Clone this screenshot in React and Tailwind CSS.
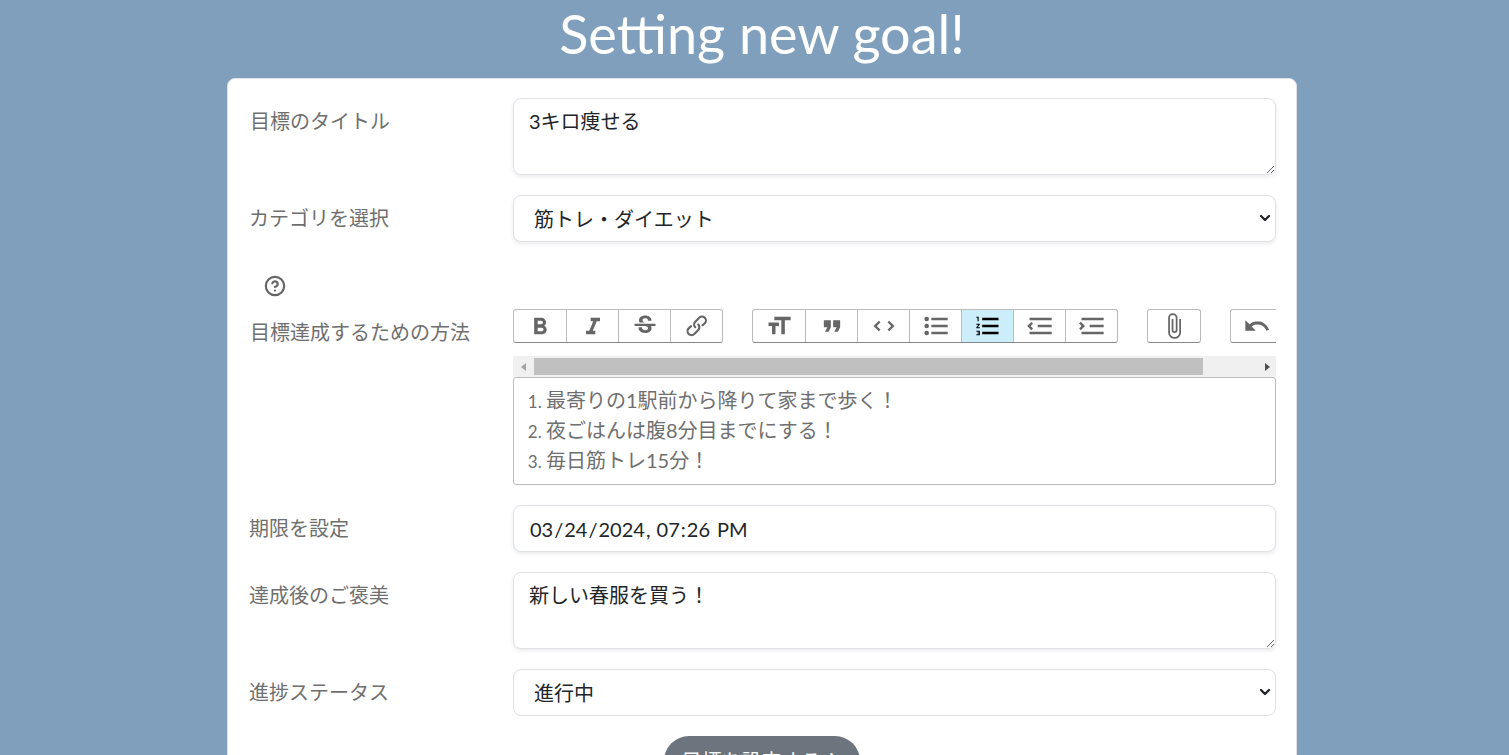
import { ChevronDown, CircleHelp } from 'lucide-react';

const CJK = 'font-["Lato","Noto_Sans_CJK_JP",sans-serif]';

const ICONS = {
  bold: 'M15.6 11.8c1-.7 1.6-1.8 1.6-2.8a4 4 0 0 0-4-4H7v14h7c2.1 0 3.7-1.7 3.7-3.8 0-1.5-.8-2.8-2.1-3.4zM10 7.5h3a1.5 1.5 0 1 1 0 3h-3v-3zm3.5 9H10v-3h3.5a1.5 1.5 0 1 1 0 3z',
  italic: 'M10 5v3h2.2l-3.4 8H6v3h8v-3h-2.2l3.4-8H18V5h-8z',
  strike: 'M6.85 7.08C6.85 4.37 9.45 3 12.24 3c1.64 0 3 .49 3.9 1.28.77.65 1.46 1.73 1.46 3.24h-3.01c0-.31-.05-.59-.15-.85-.29-.86-1.2-1.28-2.25-1.28-1.86 0-2.34 1.02-2.34 1.7 0 .48.25.88.75 1.21.38.25.77.48 1.41.7H7.39c-.21-.34-.54-.89-.54-1.92zM21 12v-2H3v2h9.62c1.15.45 1.96.75 1.96 1.97 0 1-.81 1.67-2.28 1.67-1.54 0-2.93-.54-2.93-2.51H6.4c0 .55.08 1.13.24 1.58.81 2.29 3.29 3.3 5.67 3.3 2.27 0 5.3-.89 5.3-4.05 0-.3-.01-1.16-.48-1.94H21V12z',
  link: 'M9.88 13.7a4.3 4.3 0 0 1 0-6.07l3.37-3.37a4.26 4.26 0 0 1 6.07 0 4.3 4.3 0 0 1 0 6.06l-1.96 1.72a.91.91 0 1 1-1.3-1.3l1.97-1.71a2.46 2.46 0 0 0-3.48-3.48l-3.38 3.37a2.46 2.46 0 0 0 0 3.48.91.91 0 1 1-1.3 1.3z M4.25 19.46a4.3 4.3 0 0 1 0-6.07l1.93-1.9a.91.91 0 1 1 1.3 1.3l-1.93 1.9a2.46 2.46 0 0 0 3.48 3.48l3.37-3.38c.96-.96.96-2.52 0-3.48a.91.91 0 1 1 1.3-1.3 4.3 4.3 0 0 1 0 6.07l-3.38 3.38a4.26 4.26 0 0 1-6.07 0z',
  heading: 'M12 9v3H9v7H6v-7H3V9h9zM8 4h14v3h-5v12h-3V7H8V4z',
  quote: 'M6 17h3l2-4V7H5v6h3zm8 0h3l2-4V7h-6v6h3z',
  code: 'M18.2 12 15 15.2l1.4 1.4L21 12l-4.6-4.6L15 8.8l3.2 3.2zM5.8 12 9 8.8 7.6 7.4 3 12l4.6 4.6L9 15.2 5.8 12z',
  bullet: 'M4 4a2 2 0 1 0 0 4 2 2 0 0 0 0-4zm0 6a2 2 0 1 0 0 4 2 2 0 0 0 0-4zm0 6a2 2 0 1 0 0 4 2 2 0 0 0 0-4zm4 3h14v-2H8v2zm0-6h14v-2H8v2zm0-8v2h14V5H8z',
  number: 'M2 17h2v.5H3v1h1v.5H2v1h3v-4H2v1zm1-9h1V4H2v1h1v3zm-1 3h1.8L2 13.1v.9h3v-1H3.2L5 10.9V10H2v1zm5-6v2h14V5H7zm0 14h14v-2H7v2zm0-6h14v-2H7v2z',
  outdent: 'M3 19h19v-2H3v2zm7-6h12v-2H10v2zm-8.3-.3l2.8 2.9L6 14.2 4 12l2-2-1.4-1.5L1 12l.7.7zM3 5v2h19V5H3z',
  indent: 'M3 19h19v-2H3v2zm7-6h12v-2H10v2zm-6.9-1L1 14.2l1.4 1.4L6 12l-.7-.7-3-3-1.4 1.5L3.1 12zM3 5v2h19V5H3z',
  attach: 'M16.5 6v11.5a4 4 0 1 1-8 0V5a2.5 2.5 0 0 1 5 0v10.5a1 1 0 1 1-2 0V6H10v9.5a2.5 2.5 0 0 0 5 0V5a4 4 0 1 0-8 0v12.5a5.5 5.5 0 0 0 11 0V6h-1.5z',
  undo: 'M12.5 8c-2.6 0-5 1-6.9 2.6L2 7v9h9l-3.6-3.6A8 8 0 0 1 20 16l2.4-.8a10.5 10.5 0 0 0-10-7.2z',
};

function ToolButton({ icon, active }) {
  return (
    <button
      type="button"
      className={`flex w-[52px] h-full shrink-0 items-center justify-center border-l border-[#bbbbbb] first:border-l-0 ${active ? 'bg-[#cbeefa]' : ''}`}
    >
      <svg viewBox="0 0 24 24" className={`w-[28px] h-[28px] ${active ? 'fill-black' : 'fill-[#666666]'}`}>
        <path d={ICONS[icon]} />
      </svg>
    </button>
  );
}

function ToolGroup({ icons, active }) {
  return (
    <div className="flex h-[34px] shrink-0 overflow-hidden rounded-[3px] border border-[#bbbbbb] border-b-[#888888] bg-white">
      {icons.map((icon) => (
        <ToolButton key={icon} icon={icon} active={icon === active} />
      ))}
    </div>
  );
}

function FormRow({ label, labelClass = '', children }) {
  return (
    <div className="flex items-start">
      <label className={`w-[264px] shrink-0 text-[20px] leading-[30px] text-[#6f6f6f] ${labelClass}`}>{label}</label>
      <div className="min-w-0 flex-1">{children}</div>
    </div>
  );
}

function TextArea({ value }) {
  return (
    <textarea
      readOnly
      value={value}
      className="block h-[77px] w-full rounded-[8px] border border-[#dee2e6] bg-white px-[15px] py-[7px] text-[20px] leading-[30px] text-[#212529] shadow-[0_2px_4px_rgba(0,0,0,0.08)] outline-none"
    />
  );
}

function SelectBox({ value, shadow }) {
  return (
    <div className="relative">
      <select
        defaultValue={value}
        className={`block h-[47px] w-full appearance-none rounded-[8px] border border-[#dee2e6] bg-white pl-[20px] pr-[40px] text-[20px] text-[#212529] outline-none ${shadow ? 'shadow-[0_2px_4px_rgba(0,0,0,0.08)]' : ''}`}
      >
        <option>{value}</option>
      </select>
      <ChevronDown size={16} strokeWidth={3.5} className="pointer-events-none absolute right-[3px] top-[15px] text-[#212529]" />
    </div>
  );
}

export default function App() {
  return (
    <div className={`h-screen overflow-hidden bg-[#7f9fbd] ${CJK}`}>
      <div className="ml-[227px] w-[1070px]">
        <h1 className="h-[78px] pt-[1px] text-center text-[54px] leading-[66px] font-normal text-white">Setting new goal!</h1>
        <form className="flex flex-col gap-[20px] rounded-[8px] border border-[#dee2e6] bg-white pb-[40px] pl-[21px] pr-[20px] pt-[19px]">
          <FormRow label="目標のタイトル" labelClass="pl-[1px] pt-[8px]">
            <TextArea value="3キロ痩せる" />
          </FormRow>

          <FormRow label="カテゴリを選択" labelClass="pt-[8px]">
            <SelectBox value="筋トレ・ダイエット" shadow />
          </FormRow>

          <div className="flex items-start">
            <div className="w-[264px] shrink-0">
              <div className="pl-[15px] pt-[13px] text-[#666666]">
                <CircleHelp size={22} strokeWidth={2.4} />
              </div>
              <label className="mt-[20px] block pl-[1px] text-[20px] leading-[30px] text-[#6f6f6f]">目標達成するための方法</label>
            </div>
            <div className="min-w-0 flex-1 pt-[47px]">
              <div className="flex gap-[29px] overflow-hidden pb-[13px]">
                <ToolGroup icons={['bold', 'italic', 'strike', 'link']} />
                <ToolGroup icons={['heading', 'quote', 'code', 'bullet', 'number', 'outdent', 'indent']} active="number" />
                <ToolGroup icons={['attach']} />
                <ToolGroup icons={['undo', 'attach']} />
              </div>
              <div className="flex h-[21px] items-center bg-[#f0f0f0]">
                <div className="flex w-[21px] justify-center">
                  <div className="h-0 w-0 border-y-[4px] border-r-[5px] border-y-transparent border-r-[#a3a3a3]" />
                </div>
                <div className="h-[17px] w-[669px] bg-[#c0c0c0]" />
                <div className="flex flex-1 justify-end pr-[6px]">
                  <div className="h-0 w-0 border-y-[4px] border-l-[5px] border-y-transparent border-l-[#505050]" />
                </div>
              </div>
              <div className="h-[108px] rounded-[3px] border border-[#bbbbbb] px-[13px] py-[7px] text-[20px] leading-[30px] text-[#6f6f6f]">
                <ol className="list-decimal pl-[19px] marker:text-[17px]">
                  <li>最寄りの1駅前から降りて家まで歩く！</li>
                  <li>夜ごはんは腹8分目までにする！</li>
                  <li>毎日筋トレ15分！</li>
                </ol>
              </div>
            </div>
          </div>

          <FormRow label="期限を設定" labelClass="pt-[8px]">
            <input
              type="datetime-local"
              readOnly
              defaultValue="2024-03-24T19:26"
              className="block h-[47px] w-full rounded-[8px] border border-[#dee2e6] bg-white px-[15px] text-[20px] text-[#212529] shadow-[0_2px_4px_rgba(0,0,0,0.08)] outline-none"
            />
          </FormRow>

          <FormRow label="達成後のご褒美" labelClass="pt-[8px]">
            <TextArea value="新しい春服を買う！" />
          </FormRow>

          <FormRow label="進捗ステータス" labelClass="pt-[8px]">
            <SelectBox value="進行中" />
          </FormRow>

          <div className="flex justify-center pr-[2px]">
            <button type="button" className="h-[50px] rounded-full bg-[#6c757d] px-[18px] text-[20px] text-white">
              目標を設定する！
            </button>
          </div>
        </form>
      </div>
    </div>
  );
}
